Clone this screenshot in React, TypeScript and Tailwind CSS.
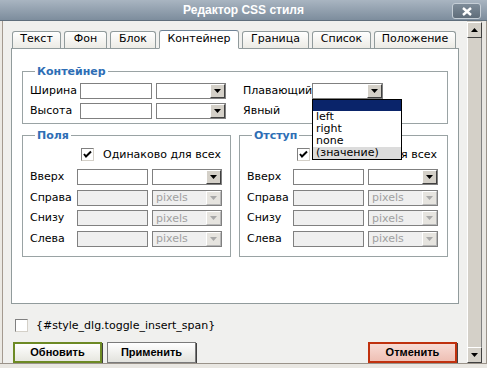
import React from 'react';

const tabs = [
  { label: 'Текст', w: 'w-[49px]' },
  { label: 'Фон', w: 'w-[43px]' },
  { label: 'Блок', w: 'w-[46px]' },
  { label: 'Контейнер', w: 'w-[80px]', active: true },
  { label: 'Граница', w: 'w-[67px]' },
  { label: 'Список', w: 'w-[59px]' },
  { label: 'Положение', w: 'w-[82px]' },
];

function Arrow({ dim }: { dim?: boolean }) {
  return (
    <svg width="7" height="4" viewBox="0 0 7 4">
      <path d="M0 0h7L3.5 4z" fill={dim ? '#a8a8a8' : '#000'} />
    </svg>
  );
}

function Input({ w, disabled }: { w: string; disabled?: boolean }) {
  return (
    <div
      className={`${w} h-[16px] border border-[#808080] ${disabled ? 'bg-[#efefef]' : 'bg-white'}`}
    />
  );
}

function Select({ w, disabled, value }: { w: string; disabled?: boolean; value?: string }) {
  return (
    <div
      className={`${w} h-[16px] border border-[#808080] flex items-center ${disabled ? 'bg-[#efefef]' : 'bg-white'}`}
    >
      <span className="flex-1 pl-[3px] text-[11px] leading-none text-[#a0a0a0]">{value}</span>
      <div
        className={`w-[15px] h-[14px] flex items-center justify-center border border-t-white border-l-white ${
          disabled ? 'bg-[#e6e4df] border-r-[#b8b8b8] border-b-[#b8b8b8]' : 'bg-[#d4d0c8] border-r-[#404040] border-b-[#404040]'
        }`}
      >
        <Arrow dim={disabled} />
      </div>
    </div>
  );
}

function Check({ checked }: { checked?: boolean }) {
  return (
    <div className="w-[13px] h-[13px] border border-[#808080] border-b-[#d4d0c8] border-r-[#d4d0c8] bg-white flex items-center justify-center">
      {checked && (
        <svg width="9" height="9" viewBox="0 0 9 9">
          <path d="M1 4l2 2.5L8 1.5" stroke="#000" strokeWidth="2" fill="none" />
        </svg>
      )}
    </div>
  );
}

function Legend({ children }: { children: React.ReactNode }) {
  return (
    <legend className="ml-[5px] px-[2px] text-[11px] font-bold text-[#2e6eb5] leading-[13px]">
      {children}
    </legend>
  );
}

function SideRows({ label }: { label: number }) {
  const rows = ['Вверх', 'Справа', 'Снизу', 'Слева'];
  return (
    <div className="flex flex-col gap-[4px]">
      {rows.map((r, i) => (
        <div key={r} className="flex items-center">
          <span className="text-[11px]" style={{ width: label }}>
            {r}
          </span>
          <Input w="w-[71px]" disabled={i > 0} />
          <div className="w-[4px]" />
          <Select w="w-[70px]" disabled={i > 0} value={i > 0 ? 'pixels' : ''} />
        </div>
      ))}
    </div>
  );
}

export default function App() {
  return (
    <div className="w-[487px] h-[368px] flex flex-col bg-[#d4d0c8] overflow-hidden font-['DejaVu_Sans',sans-serif] text-black">
      {/* Title bar */}
      <div className="h-[22px] relative flex items-center justify-center bg-gradient-to-b from-[#a9b5c1] to-[#7d8d9d] border-b border-[#5f6e7c]">
        <span className="text-white font-bold text-[12px] font-['Liberation_Sans',sans-serif]">Редактор CSS стиля</span>
        <div className="absolute right-[6px] top-[3px] w-[29px] h-[16px] rounded-[3px] border border-[#c5ced6] bg-gradient-to-b from-[#7e8c99] to-[#5f6d7a] flex items-center justify-center">
          <svg width="10" height="9" viewBox="0 0 10 9">
            <path d="M1 1l8 7M9 1L1 8" stroke="#fff" strokeWidth="2.4" />
          </svg>
        </div>
      </div>

      <div className="flex flex-1">
        <div className="w-[3px] bg-[#ebe9e4] border-r border-[#a49a90]" />
        {/* Dialog body */}
        <div className="w-[464px] bg-[#f0f0ee] flex flex-col pt-[9px]">
          <div className="flex items-end gap-[3px] pl-[9px] h-[18px]">
            {tabs.map(t => (
              <div
                key={t.label}
                className={`${t.w} flex items-center justify-center text-[11px] border border-[#919b9c] rounded-t-[3px] ${
                  t.active
                    ? 'h-[19px] bg-white border-b-white border-t-[#6f8396] relative z-10 -mb-px'
                    : 'h-[17px] bg-gradient-to-b from-white to-[#ecebe5] border-b-0'
                }`}
              >
                {t.label}
              </div>
            ))}
          </div>

          <div className="ml-[8px] w-[448px] h-[256px] bg-white border border-[#919b9c] px-[10px] pt-[16px] flex flex-col gap-[5px]">
            <fieldset className="border border-[#9aa3a4] pl-[7px] pb-[3px] pt-[5px]">
              <Legend>Контейнер</Legend>
              <div className="flex flex-col gap-[4px]">
                <div className="flex items-center">
                  <span className="w-[50px] text-[11px]">Ширина</span>
                  <Input w="w-[72px]" />
                  <div className="w-[4px]" />
                  <Select w="w-[70px]" />
                  <span className="ml-[17px] w-[69px] text-[11px]">Плавающий</span>
                  <div className="relative">
                    <Select w="w-[71px]" />
                    <div className="absolute left-0 top-[16px] w-[90px] border border-black bg-white z-20 text-[11px] leading-[12px]">
                      <div className="h-[11px] bg-[#0a246a]" />
                      <div className="pl-[3px] h-[12px]">left</div>
                      <div className="pl-[3px] h-[12px]">right</div>
                      <div className="pl-[3px] h-[12px]">none</div>
                      <div className="pl-[3px] h-[12px] bg-[#dcdcdc]">(значение)</div>
                    </div>
                  </div>
                </div>
                <div className="flex items-center">
                  <span className="w-[50px] text-[11px]">Высота</span>
                  <Input w="w-[72px]" />
                  <div className="w-[4px]" />
                  <Select w="w-[70px]" />
                  <span className="ml-[17px] text-[11px]">Явный</span>
                </div>
              </div>
            </fieldset>

            <div className="flex gap-[8px]">
              <fieldset className="w-[209px] border border-[#9aa3a4] pl-[7px] pb-[9px]">
                <Legend>Поля</Legend>
                <div className="flex items-center gap-[9px] pl-[51px] pt-[5px] pb-[6px]">
                  <Check checked />
                  <span className="text-[11px]">Одинаково для всех</span>
                </div>
                <SideRows label={47} />
              </fieldset>
              <fieldset className="w-[209px] border border-[#9aa3a4] pl-[7px] pb-[9px]">
                <Legend>Отступ</Legend>
                <div className="flex items-center gap-[9px] pl-[50px] pt-[5px] pb-[6px]">
                  <Check checked />
                  <span className="text-[11px]">Одинаково для всех</span>
                </div>
                <SideRows label={46} />
              </fieldset>
            </div>
          </div>

          <div className="flex items-center gap-[8px] pl-[12px] mt-[14px]">
            <Check />
            <span className="text-[11px]">{'{#style_dlg.toggle_insert_span}'}</span>
          </div>

          <div className="flex items-center pl-[10px] mt-[8px] font-['Liberation_Sans',sans-serif] text-[11px] font-bold">
            <button className="w-[89px] h-[21px] border-2 border-[#6d8a25] bg-gradient-to-b from-white to-[#e7e7e0] shadow-[1px_1px_0_#404040]">
              Обновить
            </button>
            <button className="ml-[5px] w-[89px] h-[21px] border border-[#7a7a7a] bg-gradient-to-b from-white to-[#e2e2dd] shadow-[1px_1px_0_#404040]">
              Применить
            </button>
            <button className="ml-auto mr-[10px] w-[89px] h-[21px] border-2 border-[#c0310e] bg-gradient-to-b from-[#f8dcd5] to-[#eebfb4] shadow-[1px_1px_0_#404040]">
              Отменить
            </button>
          </div>
        </div>

        {/* Scrollbar */}
        <div className="w-[15px] flex flex-col bg-[#d4d0c8] mt-px">
          <div className="h-[16px] bg-[#d4d0c8] border border-t-white border-l-white border-r-[#404040] border-b-[#404040] flex items-center justify-center">
            <svg width="7" height="4" viewBox="0 0 7 4">
              <path d="M0 4h7L3.5 0z" fill="#000" />
            </svg>
          </div>
          <div className="flex-1 border-l border-white border-r border-r-[#808080]" />
          <div className="h-[16px] bg-[#d4d0c8] border border-t-white border-l-white border-r-[#404040] border-b-[#404040] flex items-center justify-center">
            <Arrow />
          </div>
        </div>
        <div className="flex-1 bg-[#e9e7e2] border-r border-[#9a938a]" />
      </div>
      <div className="h-[5px] bg-[#e9e7e2] border-t border-[#9a938a]" />
    </div>
  );
}
